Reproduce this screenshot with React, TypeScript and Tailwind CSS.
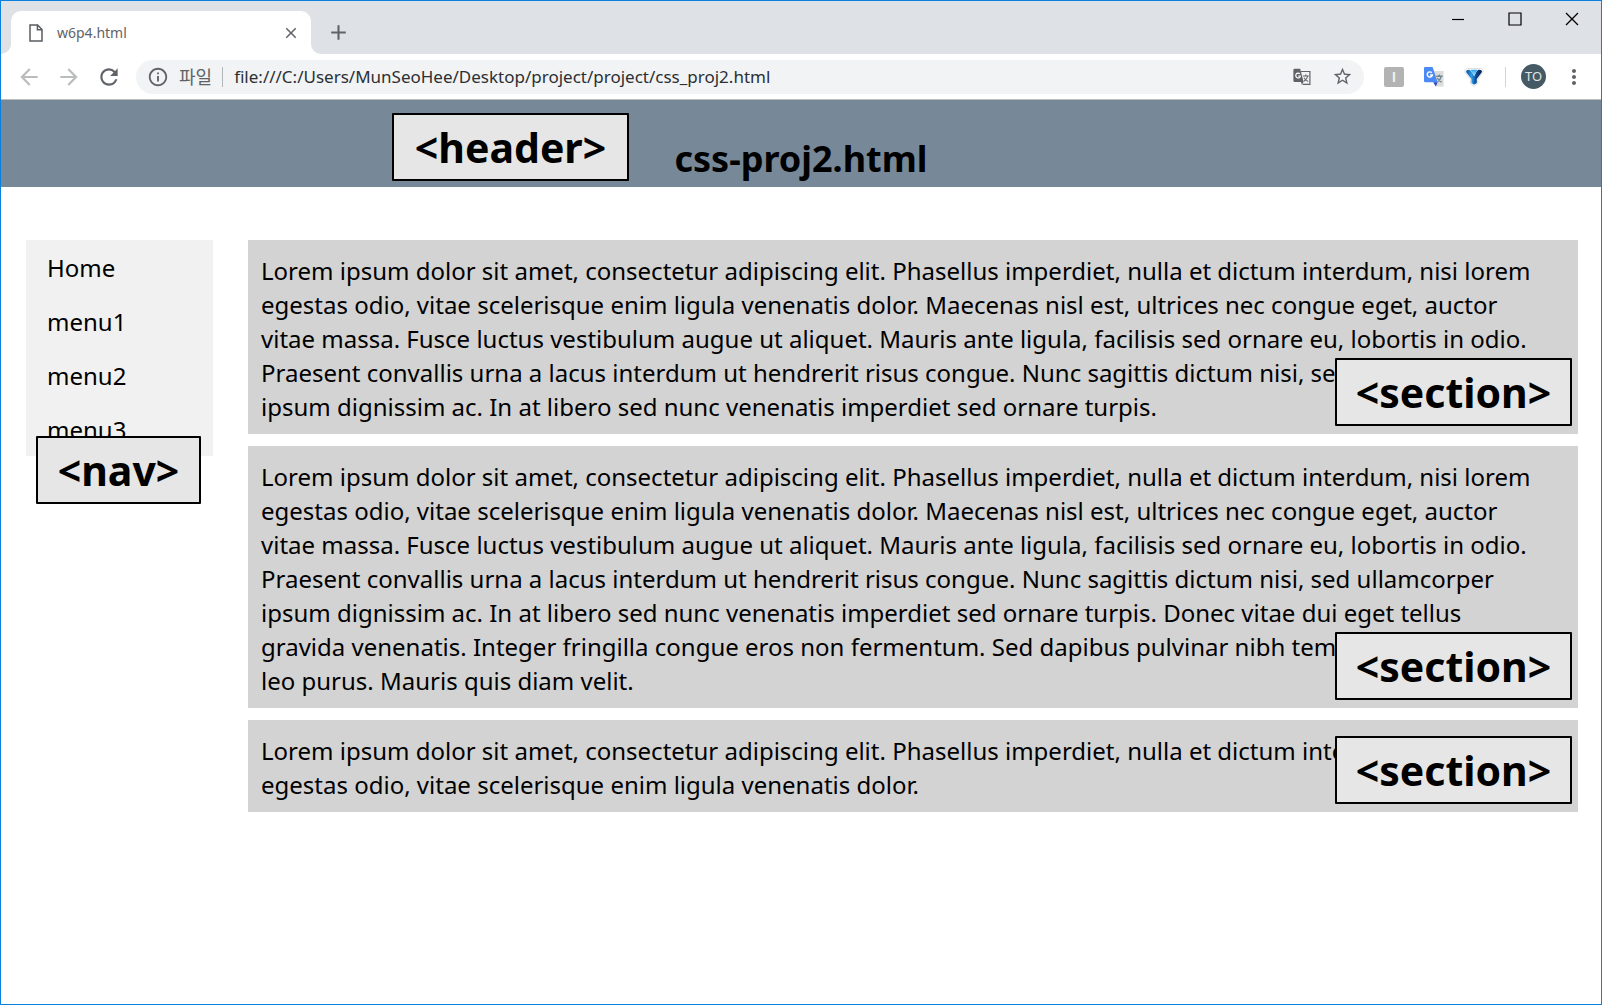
import type { ReactNode } from "react";
import { MdAdd, MdArrowBack, MdArrowForward, MdClose, MdInfoOutline, MdMoreVert, MdRefresh, MdStarBorder } from "react-icons/md";

const menu = ["Home", "menu1", "menu2", "menu3"];

const sections = [
  [
    "Lorem ipsum dolor sit amet, consectetur adipiscing elit. Phasellus imperdiet, nulla et dictum interdum, nisi lorem",
    "egestas odio, vitae scelerisque enim ligula venenatis dolor. Maecenas nisl est, ultrices nec congue eget, auctor",
    "vitae massa. Fusce luctus vestibulum augue ut aliquet. Mauris ante ligula, facilisis sed ornare eu, lobortis in odio.",
    "Praesent convallis urna a lacus interdum ut hendrerit risus congue. Nunc sagittis dictum nisi, sed ullamcorper",
    "ipsum dignissim ac. In at libero sed nunc venenatis imperdiet sed ornare turpis.",
  ],
  [
    "Lorem ipsum dolor sit amet, consectetur adipiscing elit. Phasellus imperdiet, nulla et dictum interdum, nisi lorem",
    "egestas odio, vitae scelerisque enim ligula venenatis dolor. Maecenas nisl est, ultrices nec congue eget, auctor",
    "vitae massa. Fusce luctus vestibulum augue ut aliquet. Mauris ante ligula, facilisis sed ornare eu, lobortis in odio.",
    "Praesent convallis urna a lacus interdum ut hendrerit risus congue. Nunc sagittis dictum nisi, sed ullamcorper",
    "ipsum dignissim ac. In at libero sed nunc venenatis imperdiet sed ornare turpis. Donec vitae dui eget tellus",
    "gravida venenatis. Integer fringilla congue eros non fermentum. Sed dapibus pulvinar nibh tempor porta. Cras ac",
    "leo purus. Mauris quis diam velit.",
  ],
  [
    "Lorem ipsum dolor sit amet, consectetur adipiscing elit. Phasellus imperdiet, nulla et dictum interdum, nisi lorem",
    "egestas odio, vitae scelerisque enim ligula venenatis dolor.",
  ],
];

function IconButton({ label, className = "", children }: { label: string; className?: string; children: ReactNode }) {
  return (
    <button type="button" aria-label={label} className={`flex h-8 w-10 shrink-0 items-center justify-center ${className}`}>
      {children}
    </button>
  );
}

function Tag({ className, children }: { className: string; children: ReactNode }) {
  return (
    <div className={`absolute flex h-[68px] items-center justify-center rounded-[1px] border-2 border-black bg-[#e6e6e6] text-[41px] leading-none font-bold text-black ${className}`}>
      {children}
    </div>
  );
}

function TranslateMono() {
  return (
    <svg width="18" height="18" viewBox="0 0 18 18" fill="none" aria-hidden="true">
      <path d="M8 3.5h8.9v12.8H9.6" stroke="#5f6368" strokeWidth="1.2" />
      <path d="M9.8 8h6M12.8 6.6V8M14.8 8c-.5 2.4-2 4-4 5.2M11 9.8c.9 1.6 2.2 2.8 4.2 3.8" stroke="#5f6368" strokeWidth="1.1" />
      <path d="M1.6.8h5.6L10.6 14H1.6a1.2 1.2 0 0 1-1.2-1.2V2A1.2 1.2 0 0 1 1.6.8z" fill="#5f6368" />
      <path d="M8 14h2.6l-1.8 2.8z" fill="#5f6368" />
      <path d="M6.9 5.9A2.4 2.4 0 1 0 7.5 8H5.2" stroke="#fff" strokeWidth="1.2" />
    </svg>
  );
}

function TranslateColor() {
  return (
    <svg width="20" height="20" viewBox="0 0 20 20" fill="none" aria-hidden="true">
      <path d="M9 4h10.6v15.6H12z" fill="#dcdcdc" />
      <path d="M12.2 9.2h6.4M15.4 7.6v1.6M17.4 9.2c-.6 2.6-2 4.4-4 5.6M13.2 11c1 1.8 2.4 3 4.4 4.2" stroke="#6f8790" strokeWidth="1.4" />
      <path d="M1.2 0h7.4l5 15.2H1.2A1.2 1.2 0 0 1 0 14V1.2A1.2 1.2 0 0 1 1.2 0z" fill="#4b8af4" />
      <path d="M9.2 15.2h4.4L11.8 19.4z" fill="#2f47c2" />
      <path d="M7.8 5.7A2.6 2.6 0 1 0 8.4 8H5.9" stroke="#fff" strokeWidth="1.4" />
    </svg>
  );
}

function Funnel() {
  return (
    <svg width="20" height="20" viewBox="0 0 20 20" aria-hidden="true">
      <defs>
        <linearGradient id="funnel" x1="0" x2="1" y1="0" y2="0">
          <stop offset="0" stopColor="#0a4f9e" />
          <stop offset=".35" stopColor="#2e9be6" />
          <stop offset=".6" stopColor="#0d4fa0" />
          <stop offset="1" stopColor="#041a48" />
        </linearGradient>
        <linearGradient id="shine" x1="0" x2="0" y1="0" y2="1">
          <stop offset="0" stopColor="#2aa0ea" />
          <stop offset="1" stopColor="#c4f0ff" />
        </linearGradient>
      </defs>
      <path d="M3.6 1.4h12.8c2.8 0 3.4 2.8 1.8 4.8l-4.4 6v4.4L10 19.4l-3.6-2.8v-4.4L1.6 6.2C.2 4.2 1 1.4 3.6 1.4z" fill="#fff" stroke="#dedede" strokeWidth="1" />
      <path d="M2.8 3.2c1.6-1 3.6-.6 4.4 1L10 8.6l2.8-4.4c.8-1.6 2.8-2 4.4-1 1 .6.8 1.8.2 2.6L12.8 12v4L10 17.8 7.4 16v-4L2.6 5.8c-.6-.8-.6-2 .2-2.6z" fill="url(#funnel)" />
      <path d="M6.6 2.8h6.8L10.2 9.6z" fill="url(#shine)" />
    </svg>
  );
}

function Browser() {
  return (
    <div className="text-[#5f6368]">
      <div className="flex h-[53px] justify-between bg-[#dee1e6]">
        <div className="flex items-end">
          <svg width="10" height="10" viewBox="0 0 10 10" aria-hidden="true">
            <path d="M10 0v10H0A10 10 0 0 0 10 0z" fill="#fff" />
          </svg>
          <div className="flex h-[43px] w-[300px] items-center rounded-t-[10px] bg-white pr-[11px] pl-[18px]">
            <svg width="14" height="18" viewBox="0 0 14 18" fill="none" stroke="#5a5d61" strokeWidth="1.5" aria-hidden="true">
              <path d="M1 1h7.6L13 5.6V17H1zM8.4 1v4.8H13" />
            </svg>
            <span className="ml-3.5 flex-1 text-sm">w6p4.html</span>
            <button type="button" aria-label="Close tab" className="flex size-[18px] items-center justify-center">
              <MdClose size={18} />
            </button>
          </div>
          <svg width="10" height="10" viewBox="0 0 10 10" aria-hidden="true">
            <path d="M0 0v10h10A10 10 0 0 1 0 0z" fill="#fff" />
          </svg>
          <button type="button" aria-label="New tab" className="flex h-[43px] w-[34px] items-center justify-center">
            <MdAdd size={25} />
          </button>
        </div>
        <div className="flex h-9 pr-px">
          <button type="button" aria-label="Minimize" className="flex w-[57px] items-center justify-center">
            <svg width="14" height="14" viewBox="0 0 14 14" stroke="#000" strokeWidth="1.2"><path d="M1 7.5h12" /></svg>
          </button>
          <button type="button" aria-label="Maximize" className="flex w-[57px] items-center justify-center">
            <svg width="14" height="14" viewBox="0 0 14 14" fill="none" stroke="#000" strokeWidth="1.2"><path d="M1 1h12v12H1z" /></svg>
          </button>
          <button type="button" aria-label="Close" className="flex w-[57px] items-center justify-center">
            <svg width="14" height="14" viewBox="0 0 14 14" stroke="#000" strokeWidth="1.3"><path d="M1 1l12 12M13 1L1 13" /></svg>
          </button>
        </div>
      </div>

      <div className="flex h-[46px] items-center border-b border-[#bdbdbd] bg-white pr-[7px] pl-2">
        <IconButton label="Back" className="text-[#babcbe]"><MdArrowBack size={26} /></IconButton>
        <IconButton label="Forward" className="text-[#babcbe]"><MdArrowForward size={26} /></IconButton>
        <IconButton label="Reload"><MdRefresh size={26} /></IconButton>

        <div className="ml-[7px] flex h-[34px] min-w-0 flex-1 items-center rounded-full bg-[#f1f3f4] pr-0.5 pl-[11px]">
          <button type="button" aria-label="Site information" className="shrink-0"><MdInfoOutline size={22} /></button>
          <label htmlFor="address" className="ml-2.5 shrink-0 text-[18px] leading-6">파일</label>
          <span className="ml-2.5 h-5 w-px shrink-0 bg-[#b4b7ba]" />
          <input
            id="address"
            type="text"
            defaultValue="file:///C:/Users/MunSeoHee/Desktop/project/project/css_proj2.html"
            className="ml-[11px] min-w-0 flex-1 bg-transparent text-[17px] leading-6 text-[#2c2f33] outline-none"
          />
          <IconButton label="Translate this page"><TranslateMono /></IconButton>
          <IconButton label="Bookmark this page"><MdStarBorder size={21} /></IconButton>
        </div>

        <IconButton label="Extension I" className="ml-2.5">
          <span className="flex size-5 items-center justify-center rounded-[2px] bg-[#b3b3b3] font-['Liberation_Sans',sans-serif] text-sm font-bold text-[#f0f0f0]">I</span>
        </IconButton>
        <IconButton label="Translate extension"><TranslateColor /></IconButton>
        <IconButton label="Filter extension"><Funnel /></IconButton>
        <span className="ml-[11px] h-5 w-px bg-[#d3d5d8]" />
        <button type="button" aria-label="Profile" className="ml-[15px] flex size-[25px] items-center justify-center rounded-full bg-[#455a64] text-[13px] text-[#dfe5e8]">
          TO
        </button>
        <IconButton label="Browser menu" className="ml-2"><MdMoreVert size={24} /></IconButton>
      </div>
    </div>
  );
}

export default function App() {
  return (
    <div className="flex min-h-screen flex-col border border-[#0a82dd] bg-white font-['Noto_Sans','Noto_Sans_CJK_KR',sans-serif]">
      <Browser />

      <header className="relative bg-[#778899] pt-[33px] pb-0.5">
        <h1 className="text-center text-4xl leading-[52px] font-bold text-black">css-proj2.html</h1>
        <Tag className="top-[13px] left-[391px] w-[237px]">&lt;header&gt;</Tag>
      </header>

      <div className="flex items-start pt-[53px] pr-[23px] pl-[25px] text-2xl leading-[34px] text-black">
        <nav className="relative w-[187px] shrink-0 bg-[#f1f1f1]">
          <ul>
            {menu.map((item) => (
              <li key={item}>
                <a href="#" className="block px-[21px] pt-[11px] pb-[9px]">{item}</a>
              </li>
            ))}
          </ul>
          <Tag className="top-[196px] left-2.5 w-[165px]">&lt;nav&gt;</Tag>
        </nav>

        <main className="ml-[35px] flex min-w-0 flex-1 flex-col gap-3">
          {sections.map((lines, i) => (
            <section key={i} className="relative bg-[#d3d3d3] px-[13px] pt-3.5 pb-2.5">
              <p>
                {lines.map((line, n) => (
                  <span key={n}>
                    {n > 0 && <br />}
                    {line}
                  </span>
                ))}
              </p>
              <Tag className="right-1.5 bottom-2 w-[237px]">&lt;section&gt;</Tag>
            </section>
          ))}
        </main>
      </div>
    </div>
  );
}
